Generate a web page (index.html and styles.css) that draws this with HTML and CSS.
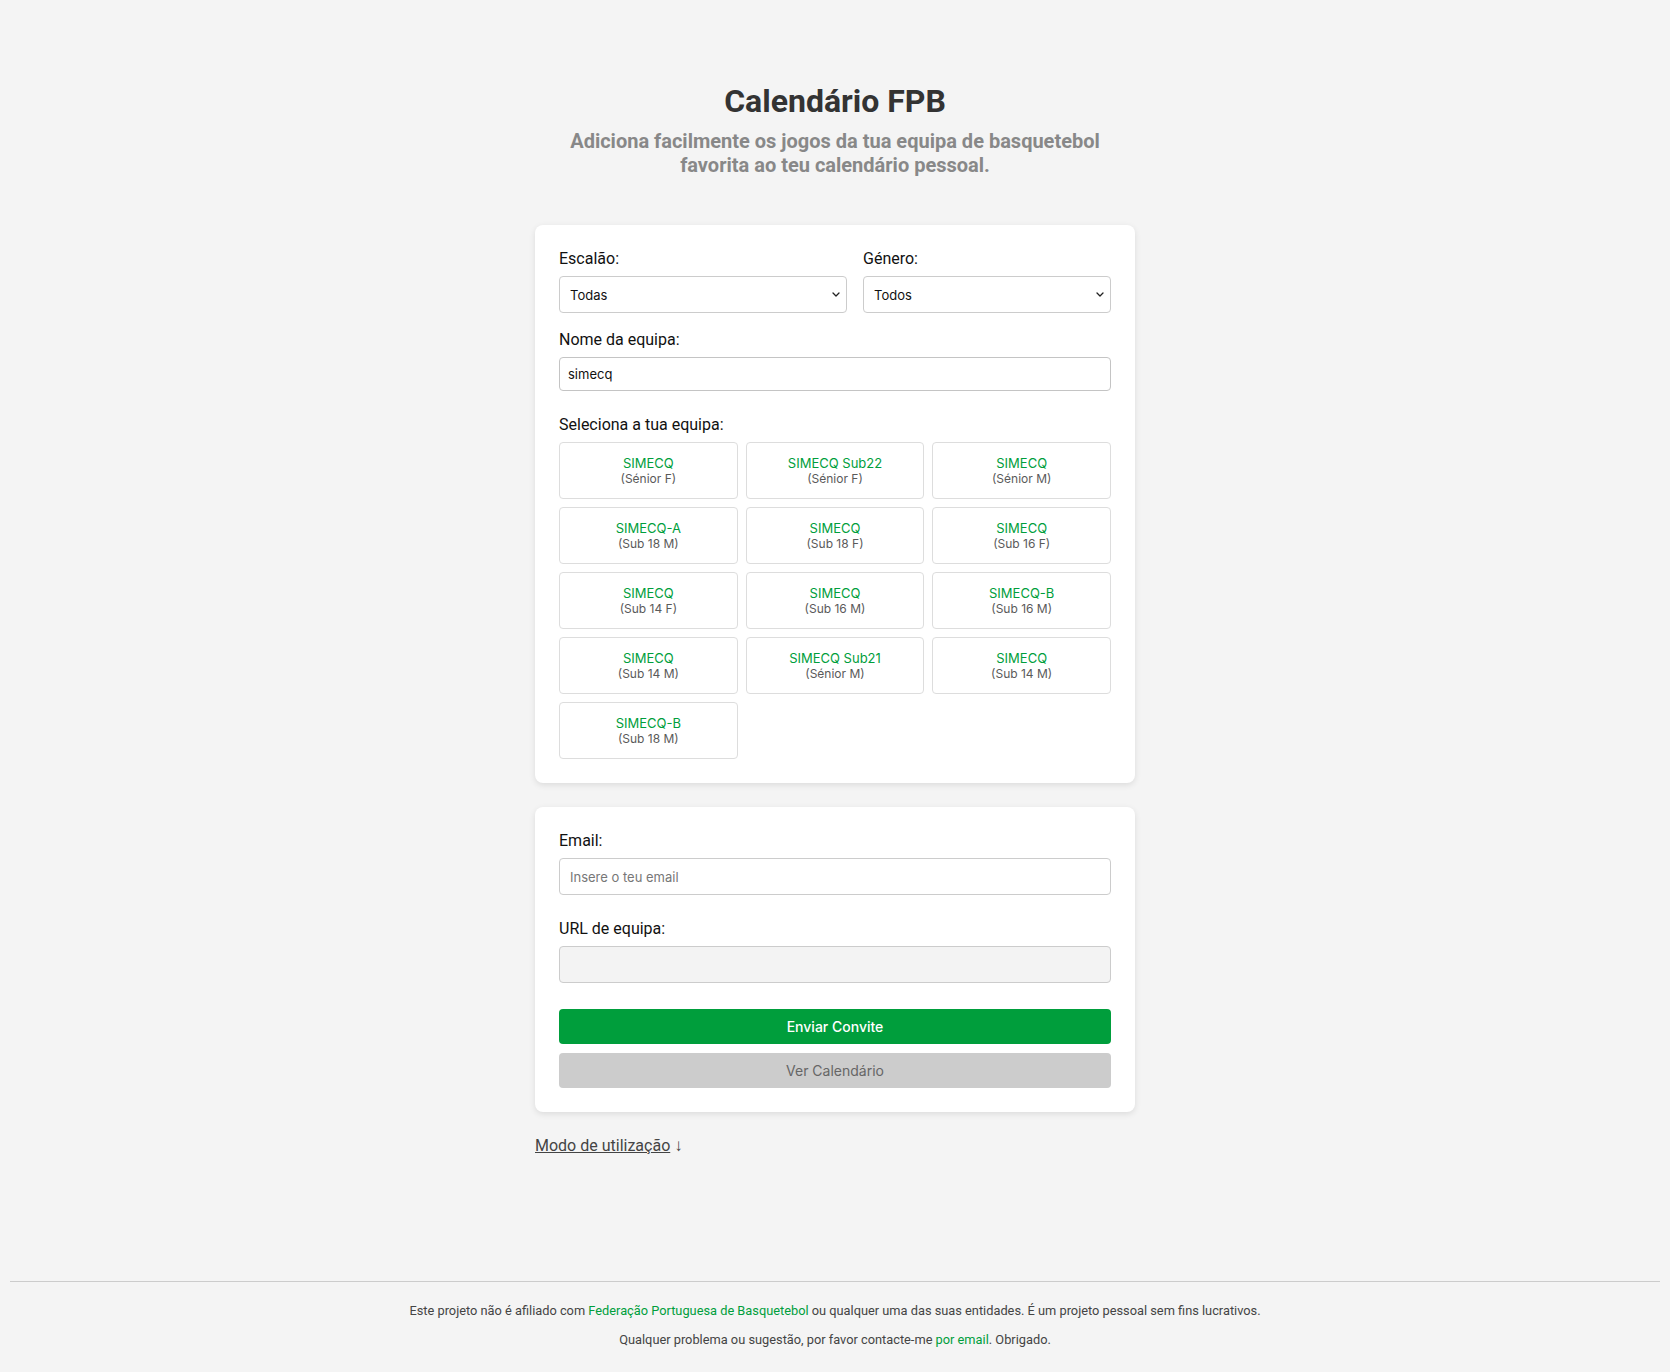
FILE: index.html
```html
<!DOCTYPE html>
<html lang="pt">
<head>
<meta charset="utf-8">
<title>Calendário FPB</title>
<link rel="stylesheet" href="styles.css">
</head>
<body>
<div class="page">
  <main class="main">
    <header class="hero">
      <h1 class="title">Calendário FPB</h1>
      <p class="subtitle">Adiciona facilmente os jogos da tua equipa de basquetebol favorita ao teu calendário pessoal.</p>
    </header>

    <section class="card">
      <div class="row">
        <div class="group">
          <label class="label">Escalão:</label>
          <div class="select-wrap">
            <select class="control select"><option>Todas</option></select>
            <svg class="chev" width="8" height="5" viewBox="0 0 8 5"><path d="M1 1l3 3 3-3" fill="none" stroke="#222" stroke-width="1.3" stroke-linecap="round" stroke-linejoin="round"/></svg>
          </div>
        </div>
        <div class="group">
          <label class="label">Género:</label>
          <div class="select-wrap">
            <select class="control select"><option>Todos</option></select>
            <svg class="chev" width="8" height="5" viewBox="0 0 8 5"><path d="M1 1l3 3 3-3" fill="none" stroke="#222" stroke-width="1.3" stroke-linecap="round" stroke-linejoin="round"/></svg>
          </div>
        </div>
      </div>

      <div class="group gap-lg">
        <label class="label">Nome da equipa:</label>
        <input class="control text-input" type="text" value="simecq">
      </div>

      <div class="group">
        <label class="label">Seleciona a tua equipa:</label>
        <div class="teams">
          <button class="team"><span class="team-name">SIMECQ</span><span class="team-sub">(Sénior F)</span></button>
          <button class="team"><span class="team-name">SIMECQ Sub22</span><span class="team-sub">(Sénior F)</span></button>
          <button class="team"><span class="team-name">SIMECQ</span><span class="team-sub">(Sénior M)</span></button>
          <button class="team"><span class="team-name">SIMECQ-A</span><span class="team-sub">(Sub 18 M)</span></button>
          <button class="team"><span class="team-name">SIMECQ</span><span class="team-sub">(Sub 18 F)</span></button>
          <button class="team"><span class="team-name">SIMECQ</span><span class="team-sub">(Sub 16 F)</span></button>
          <button class="team"><span class="team-name">SIMECQ</span><span class="team-sub">(Sub 14 F)</span></button>
          <button class="team"><span class="team-name">SIMECQ</span><span class="team-sub">(Sub 16 M)</span></button>
          <button class="team"><span class="team-name">SIMECQ-B</span><span class="team-sub">(Sub 16 M)</span></button>
          <button class="team"><span class="team-name">SIMECQ</span><span class="team-sub">(Sub 14 M)</span></button>
          <button class="team"><span class="team-name">SIMECQ Sub21</span><span class="team-sub">(Sénior M)</span></button>
          <button class="team"><span class="team-name">SIMECQ</span><span class="team-sub">(Sub 14 M)</span></button>
          <button class="team"><span class="team-name">SIMECQ-B</span><span class="team-sub">(Sub 18 M)</span></button>
        </div>
      </div>
    </section>

    <section class="card card-second">
      <div class="group gap-lg">
        <label class="label">Email:</label>
        <input class="control tall" type="email" placeholder="Insere o teu email">
      </div>
      <div class="group">
        <label class="label">URL de equipa:</label>
        <input class="control tall readonly" type="text" readonly>
      </div>
      <div class="actions">
        <button class="btn btn-primary">Enviar Convite</button>
        <button class="btn btn-muted">Ver Calendário</button>
      </div>
    </section>

    <p class="usage"><a class="usage-link" href="#modo">Modo de utilização</a> <span class="arrow">↓</span></p>
  </main>

  <footer class="footer">
    <hr class="rule">
    <div class="footer-text">
      <p>Este projeto não é afiliado com <a href="#fpb">Federação Portuguesa de Basquetebol</a> ou qualquer uma das suas entidades. É um projeto pessoal sem fins lucrativos.</p>
      <p>Qualquer problema ou sugestão, por favor contacte-me <a href="#email">por email</a>. Obrigado.</p>
    </div>
  </footer>
</div>
</body>
</html>
```

FILE: styles.css
```css
* { box-sizing: border-box; }

html, body {
  margin: 0;
  padding: 0;
  background: #f4f4f4;
}

body {
  font-family: Roboto, "Liberation Sans", sans-serif;
  color: #111;
}

.page {
  min-height: 100vh;
  display: flex;
  flex-direction: column;
}

.main {
  width: 600px;
  margin: 0 auto;
  padding-top: 82px;
}

.hero {
  text-align: center;
  margin-bottom: 48px;
}

.title {
  margin: 0;
  font-size: 32px;
  line-height: 38px;
  font-weight: 700;
  color: #333;
}

.subtitle {
  margin: 9px 0 0;
  font-size: 20px;
  line-height: 24px;
  font-weight: 700;
  color: #888;
}

.card {
  background: #fff;
  border-radius: 8px;
  box-shadow: 0 2px 6px rgba(0, 0, 0, 0.1);
  padding: 24px;
}

.card-second {
  margin-top: 24px;
}

.row {
  display: grid;
  grid-template-columns: 288fr 248fr;
  column-gap: 16px;
  margin-bottom: 17px;
}

.group {
  display: flex;
  flex-direction: column;
}

.gap-lg {
  margin-bottom: 24px;
}

.label {
  font-size: 16px;
  line-height: 19px;
  color: #111;
  margin-bottom: 8px;
}

.control {
  font-family: Inter, "Noto Sans", sans-serif;
  font-size: 13px;
  color: #111;
  background: #fff;
  border: 1px solid #ccc;
  border-radius: 4px;
  width: 100%;
  margin: 0;
  outline: none;
}

.select-wrap {
  position: relative;
}

.select {
  -webkit-appearance: none;
  appearance: none;
  height: 37px;
  padding: 0 24px 0 10px;
}

.chev {
  position: absolute;
  right: 7px;
  top: 16px;
  pointer-events: none;
}

.text-input {
  height: 34px;
  padding: 0 8px;
  border-color: #c4c4c4;
}

.tall {
  height: 37px;
  padding: 0 10px;
}

.tall::placeholder {
  color: #777;
}

.readonly {
  background: #f3f3f3;
}

.teams {
  display: grid;
  grid-template-columns: repeat(3, 1fr);
  gap: 8px;
}

.team {
  display: flex;
  flex-direction: column;
  align-items: center;
  background: #fff;
  border: 1px solid #ddd;
  border-radius: 4px;
  padding: 12px 6px;
  margin: 0;
  font-family: Inter, "Noto Sans", sans-serif;
  cursor: pointer;
}

.team-name {
  font-size: 13px;
  line-height: 16px;
  color: #009e3c;
}

.team-sub {
  font-size: 12px;
  line-height: 15px;
  color: #5a5a5a;
}

.actions {
  display: flex;
  flex-direction: column;
  gap: 9px;
  margin-top: 26px;
}

.btn {
  height: 35px;
  border: none;
  border-radius: 4px;
  font-family: Inter, "Noto Sans", sans-serif;
  font-size: 14px;
  width: 100%;
  margin: 0;
}

.btn-primary {
  background: #009e3c;
  color: #fff;
  font-weight: 500;
}

.btn-muted {
  background: #cccccc;
  color: #666;
}

.usage {
  margin: 24px 0 0;
  font-size: 16px;
  line-height: 19px;
  color: #444;
}

.usage-link {
  color: #444;
  text-decoration: underline;
}

.arrow {
  color: #444;
  font-size: 17px;
}

.footer {
  margin-top: auto;
  padding: 0 10px 25px;
}

.rule {
  margin: 0;
  border: none;
  border-top: 1px solid #ccc;
}

.footer-text {
  padding-top: 21px;
  text-align: center;
  font-size: 12.8px;
  line-height: 15px;
  color: #444;
}

.footer-text p {
  margin: 0 0 14px;
}

.footer-text p:last-child {
  margin-bottom: 0;
}

.footer-text a {
  color: #009e3c;
  text-decoration: none;
}
```
